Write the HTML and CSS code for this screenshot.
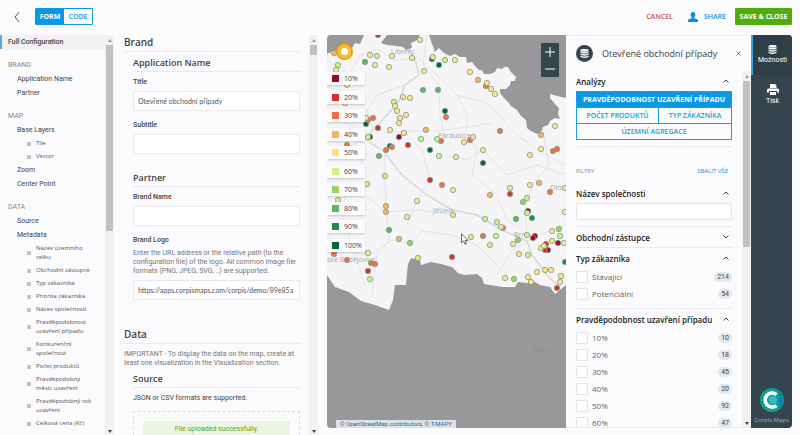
FILE: index.html
```html
<!DOCTYPE html>
<html lang="en">
<head>
    <meta charset="UTF-8">
    <meta name="viewport" content="width=device-width, initial-scale=1.0">
    <title>Corpis Maps - Configuration</title>
    <link rel="stylesheet" href="styles.css">
</head>
<body>

<header class="topbar">
    <button class="back" aria-label="Back">
        <svg width="6" height="12" viewBox="0 0 6 12"><path d="M5 1L1 6l4 5" /></svg>
    </button>
    <div class="mode">
        <button class="mode-btn active">FORM</button>
        <button class="mode-btn">CODE</button>
    </div>
    <div class="actions">
        <button class="cancel">CANCEL</button>
        <button class="share">
            <svg width="10" height="10" viewBox="0 0 10 10"><ellipse cx="5" cy="2.8" rx="2.3" ry="2.8" /><path d="M0 10V8.5Q0 7.400 1.500 7L3.700 6.200V5h2.600v1.200L8.500 7Q10 7.400 10 8.500V10z" /></svg>
            SHARE
        </button>
        <button class="save">SAVE &amp; CLOSE</button>
    </div>
</header>

<main class="workspace">
    <div class="nav-pane">
        <nav class="nav">
            <a href="#full" class="nav-full">Full Configuration</a>
            <h6>BRAND</h6>
            <a href="#app">Application Name</a>
            <a href="#partner">Partner</a>
            <h6>MAP</h6>
            <a href="#layers">Base Layers</a>
            <a href="#tile" class="sub">Tile</a>
            <a href="#vector" class="sub">Vector</a>
            <a href="#zoom">Zoom</a>
            <a href="#center">Center Point</a>
            <h6>DATA</h6>
            <a href="#source">Source</a>
            <a href="#metadata">Metadata</a>
            <a href="#m1" class="sub">Název územního celku</a>
            <a href="#m2" class="sub">Obchodní zástupce</a>
            <a href="#m3" class="sub">Typ zákazníka</a>
            <a href="#m4" class="sub">Priorita zákazníka</a>
            <a href="#m5" class="sub">Název společnosti</a>
            <a href="#m6" class="sub">Pravděpodobnost uzavření případu</a>
            <a href="#m7" class="sub">Konkurenční společnost</a>
            <a href="#m8" class="sub">Počet produktů</a>
            <a href="#m9" class="sub">Pravděpodobný měsíc uzavření</a>
            <a href="#m10" class="sub">Pravděpodobný rok uzavření</a>
            <a href="#m11" class="sub">Celková cena (Kč)</a>
        </nav>
        <div class="scrollbar"><i class="up"></i><i class="thumb thumb-nav"></i><i class="down"></i></div>
    </div>

    <div class="form-pane">
        <form class="form">
            <h2 id="full">Brand</h2>
            <section id="app">
                <h3>Application Name</h3>
                <label for="title">Title</label>
                <input type="text" id="title" value="Otevřené obchodní případy">
                <label for="subtitle">Subtitle</label>
                <input type="text" id="subtitle">
            </section>
            <section id="partner">
                <h3>Partner</h3>
                <label for="brandName">Brand Name</label>
                <input type="text" id="brandName">
                <label for="brandLogo">Brand Logo</label>
                <p class="hint">Enter the URL address or the relative path (to the configuration file) of the logo. All common image file formats (PNG, JPEG, SVG, ..) are supported.</p>
                <input type="text" id="brandLogo" value="https://apps.corpismaps.com/corpis/demo/89e85a">
            </section>
            <h2 class="data-title">Data</h2>
            <p class="intro">IMPORTANT - To display the data on the map, create at least one visualization in the Visualization section.</p>
            <section id="source">
                <h3>Source</h3>
                <p class="formats">JSON or CSV formats are supported.</p>
                <div class="upload">
                    <div class="upload-ok">File uploaded successfully.</div>
                </div>
            </section>
        </form>
        <div class="scrollbar"><i class="up"></i><i class="thumb thumb-form"></i><i class="down"></i></div>
    </div>

    <div class="preview">
        <div class="map">
            <svg class="map-canvas" viewBox="0 0 239 393" preserveAspectRatio="xMinYMin slice">
                <g class="roads">
                    <path d="M0 52L24 58 40 76 45 92 60 98 80 96 110 96 140 92 165 88" />
                    <path d="M38 104L56 116 75 140 100 160 125 175 150 180 175 195 200 206 205 220 222 242 232 252" class="main" />
                    <path d="M42 99L60 80 72 66 78 50 92 40 88 24 72 0" class="main" />
                    <path d="M0 25L22 40 33 20 50 14 70 26 90 22 110 40 130 60 160 68 190 100 215 118 239 130" />
                    <path d="M58 118V150L60 180 62 205 50 220 45 260" />
                    <path d="M0 150L30 155 60 177 90 175 125 180" />
                    <path d="M0 200L10 210 40 222 64 205 85 208 95 196 125 200 150 210 180 240" />
                    <path d="M118 120L140 125 156 115 180 140 210 130 239 140" />
                    <path d="M130 60L140 80 139 98 150 115 145 140 170 160 180 185 195 195" />
                    <path d="M200 200L198 175 205 150 222 130 215 90" />
                    <path d="M205 202L225 195 239 190M203 205L185 215 170 240M100 0L96 30 112 50 113 80 118 104" />
                    <path d="M0 120L20 112 35 106M0 85L20 88 40 98M40 118L20 150 15 180 28 220 38 250" />
                    <path d="M78 50L50 60 40 76M78 98L95 115 103 145 90 165 80 190" />
                </g>
                <g class="abroad">
                    <path d="M0 0H37L33 9 28 8 25 13 18 14 13 17 7 16 0 19z" />
                    <path d="M60 0L54 8 60 10 70 11 76 12 79 15 85 13 84 8 90 5 93 0z" />
                    <path d="M102 0L105 9 108 17 112 13 117 18 123 21 128 19 133 22 139 22 140 28 145 27 148 31 152 35 155 35 157 39 163 39 168 37 170 33 175 34 177 32 181 32 184 37 189 42 188 46 184 46 183 50 179 54 173 54 173 58 177 63 181 67 184 71 190 75 194 81 199 85 200 93 204 96 210 99 214 97 216 92 221 90 223 86 228 83 233 84 231 79 232 73 228 69 223 63 223 59 230 61 239 63V0z" />
                    <path d="M0 240L8 252 22 257 34 266 48 270 62 275 66 265 68 250 79 250 80 238 81 229 84 223 93 225 94 230 104 227 114 229 125 232 131 238 137 240 150 239 155 243 157 249 163 250 176 252 188 252 191 247 200 248 208 247 213 250 223 252 228 259 239 250V393H0z" />
                </g>
                <g class="places">
                    <text x="64" y="19">Liberec</text>
                    <text x="111" y="103">Pardubice</text>
                    <text x="106" y="178">Jihlava</text>
                    <text x="223" y="155">Olomouc</text>
                    <text x="187" y="202">Brno</text>
                    <text x="0" y="227">ské Budějovice</text>
                    <text x="205" y="318" class="faint">WIEN</text>
                </g>
                <g id="points"></g>
            </svg>

            <svg class="sun" width="17" height="17" viewBox="0 0 17 17"><circle cx="8.5" cy="8.5" r="7.5" class="rays" /><circle cx="8.5" cy="8.5" r="5" class="ring" /></svg>

            <ul class="legend">
                <li><i class="p10"></i>10%</li>
                <li><i class="p20"></i>20%</li>
                <li><i class="p30"></i>30%</li>
                <li><i class="p40"></i>40%</li>
                <li><i class="p50"></i>50%</li>
                <li><i class="p60"></i>60%</li>
                <li><i class="p70"></i>70%</li>
                <li><i class="p80"></i>80%</li>
                <li><i class="p90"></i>90%</li>
                <li><i class="p100"></i>100%</li>
            </ul>

            <div class="zoom">
                <button aria-label="Zoom in"><svg width="12" height="12" viewBox="0 0 12 12"><path d="M1 6h10M6 1v10" /></svg></button>
                <button aria-label="Zoom out"><svg width="12" height="12" viewBox="0 0 12 12"><path d="M1 6h10" /></svg></button>
            </div>

            <svg class="cursor" width="8" height="12" viewBox="0 0 8 12"><path d="M.5.8v9l2-1.900L4 11.300l1.400-.6L4 7.400h3z" /></svg>

            <div class="attribution">© <a href="#osm">OpenStreetMap contributors</a>, © <a href="#tmapy">T-MAPY</a></div>
        </div>

        <aside class="panel">
            <div class="panel-head">
                <span class="round-icon">
                    <svg width="9" height="9" viewBox="0 0 10 10"><ellipse cx="5" cy="1.500" rx="4.500" ry="1.500" /><path d="M.5 2.300v1.500c1 1.600 8 1.600 9 0V2.300c-1.500 1.500-7.500 1.500-9 0zM.5 4.700v1.500c1 1.600 8 1.600 9 0V4.700c-1.500 1.500-7.500 1.500-9 0zM.5 7.100v1.500c1 1.700 8 1.700 9 0V7.100c-1.500 1.500-7.500 1.500-9 0z" /></svg>
                </span>
                <h1>Otevřené obchodní případy</h1>
                <button class="close" aria-label="Close"><svg width="5" height="5" viewBox="0 0 5 5"><path d="M.5.5l4 4M4.500.5l-4 4" /></svg></button>
            </div>
            <div class="panel-body">
                <div class="panel-content">
                    <section class="group">
                        <button class="group-title">Analýzy<svg width="6" height="4" viewBox="0 0 6 4"><path d="M.5 3.500L3 1l2.500 2.500" /></svg></button>
                        <div class="analyses">
                            <button class="wide active">PRAVDĚPODOBNOST UZAVŘENÍ PŘÍPADU</button>
                            <button>POČET PRODUKTŮ</button>
                            <button>TYP ZÁKAZNÍKA</button>
                            <button class="wide">ÚZEMNÍ AGREGACE</button>
                        </div>
                    </section>
                    <div class="filters-head">
                        <span>FILTRY</span>
                        <button>SBALIT VŠE</button>
                    </div>
                    <section class="group">
                        <button class="group-title">Název společnosti<svg width="6" height="4" viewBox="0 0 6 4"><path d="M.5 3.500L3 1l2.500 2.500" /></svg></button>
                        <input type="text" class="search" aria-label="Název společnosti">
                    </section>
                    <section class="group collapsed">
                        <button class="group-title">Obchodní zástupce<svg width="6" height="4" viewBox="0 0 6 4"><path d="M.5.5L3 3 5.500.5" /></svg></button>
                    </section>
                    <section class="group">
                        <button class="group-title">Typ zákazníka<svg width="6" height="4" viewBox="0 0 6 4"><path d="M.5 3.500L3 1l2.500 2.500" /></svg></button>
                        <label class="option"><input type="checkbox">Stávající<b>214</b></label>
                        <label class="option"><input type="checkbox">Potenciální<b>54</b></label>
                    </section>
                    <section class="group">
                        <button class="group-title">Pravděpodobnost uzavření případu<svg width="6" height="4" viewBox="0 0 6 4"><path d="M.5 3.500L3 1l2.500 2.500" /></svg></button>
                        <label class="option"><input type="checkbox">10%<b>10</b></label>
                        <label class="option"><input type="checkbox">20%<b>18</b></label>
                        <label class="option"><input type="checkbox">30%<b>45</b></label>
                        <label class="option"><input type="checkbox">40%<b>20</b></label>
                        <label class="option"><input type="checkbox">50%<b>92</b></label>
                        <label class="option"><input type="checkbox">60%<b>47</b></label>
                    </section>
                </div>
                <div class="scrollbar"><i class="up"></i><i class="thumb thumb-panel"></i><i class="down"></i></div>
            </div>
        </aside>

        <div class="rail">
            <button class="rail-btn active">
                <svg width="9" height="9" viewBox="0 0 10 10"><ellipse cx="5" cy="1.500" rx="4.500" ry="1.500" /><path d="M.5 2.300v1.500c1 1.600 8 1.600 9 0V2.300c-1.500 1.500-7.500 1.500-9 0zM.5 4.700v1.500c1 1.600 8 1.600 9 0V4.700c-1.500 1.500-7.500 1.500-9 0zM.5 7.100v1.500c1 1.700 8 1.700 9 0V7.100c-1.500 1.500-7.500 1.500-9 0z" /></svg>
                Možnosti
            </button>
            <button class="rail-btn">
                <svg width="12" height="11" viewBox="0 0 12 11"><path d="M3 0h5l1.500 1.500V4H3zM1.500 4.500h9A1.500 1.500 0 0 1 12 6v2.500h-2V7H2v1.500H0V6a1.500 1.500 0 0 1 1.500-1.500zM3 8h6v3H3z" /></svg>
                Tisk
            </button>
            <a href="#corpis" class="brand">
                <svg width="24" height="24" viewBox="0 0 24 24">
                    <circle cx="12" cy="12" r="12" class="logo-bg" />
                    <path d="M12 0a12 12 0 0 1 12 12c0 4-3 6-5 8V4z" class="logo-side" />
                    <circle cx="13" cy="12" r="4" class="logo-dot" />
                    <path d="M16.500 6.500A7 7 0 1 0 16.500 17.500" class="logo-c" />
                </svg>
                Corpis Maps
            </a>
        </div>
    </div>
</main>

<script>
    // business cases by probability: [x, y, x, y, ...]
    const cases = {
        p90: [205,183, 238,227],
        p80: [38,27, 96,55, 111,55, 52,121, 62,195, 189,184],
        p100: [105,24, 112,30, 118,76, 39,89, 63,111, 103,115, 156,128],
        p10: [43,102, 72,102, 201,176, 208,201, 206,203, 231,208, 221,215],
        p20: [51,0, 51,93, 81,110, 103,145, 41,236, 183,159, 219,209, 218,215, 125,222, 230,253],
        p30: [119,82, 41,85, 46,83, 114,106, 20,110, 59,115, 65,112, 115,150, 7,219, 20,225, 44,228, 48,229,
            159,51, 173,96, 143,105, 226,116, 230,114, 223,157, 176,193, 156,201],
        p40: [7,18, 99,95, 59,171, 59,177, 72,204, 151,45, 214,100, 163,160, 212,148],
        p70: [83,208, 196,167, 191,205, 232,194, 187,244],
        p60: [11,30, 50,21, 118,25, 67,67, 41,102, 94,104, 110,104, 112,121, 58,141, 40,149, 11,165, 91,223,
            43,244, 200,163, 200,178, 158,184, 170,187, 144,202, 169,201, 163,210, 200,200, 233,201, 201,220],
        p50: [9,35, 43,20, 48,30, 65,21, 62,32, 93,5, 85,23, 106,22, 97,36, 20,50, 18,68, 76,62, 83,63, 68,71,
            70,76, 79,80, 73,83, 72,88, 39,83, 63,95, 77,98, 90,166, 80,182, 41,218, 128,25, 143,37, 160,48,
            164,54, 168,59, 137,107, 146,102, 156,115, 129,122, 228,91, 214,114, 203,120, 126,155, 183,153,
            203,150, 238,153, 126,180, 238,177, 174,192, 186,209, 225,196, 225,206, 237,208, 214,213, 217,211,
            192,219, 178,243, 201,242, 204,247, 210,237, 218,235, 224,235, 234,241, 233,247]
    };
    const points = document.getElementById('points');

    Object.keys(cases).forEach(key => {
        for (let i = 0; i < cases[key].length; i += 2) {
            const dot = document.createElementNS('http://www.w3.org/2000/svg', 'circle');
            dot.setAttribute('class', key);
            dot.setAttribute('cx', cases[key][i]);
            dot.setAttribute('cy', cases[key][i + 1]);
            dot.setAttribute('r', 2.7);
            points.appendChild(dot);
        }
    });
</script>

</body>
</html>
```
FILE: styles.css
```css
* {
    box-sizing: border-box;
}
body {
    margin: 0;
    height: 100vh;
    display: flex;
    flex-direction: column;
    overflow: hidden;
    background: #fbfafc;
    color: #444;
    font-family: 'Open Sans', 'Noto Sans', sans-serif;
    font-size: 7px;
    line-height: 9px;
}
h1, h2, h3, h6, p, ul {
    margin: 0;
    padding: 0;
}
button, input {
    font: inherit;
    color: inherit;
    margin: 0;
    padding: 0;
    border: 0;
    background: none;
}
a {
    color: inherit;
    text-decoration: none;
}

/* top bar */
.topbar {
    flex: none;
    height: 35px;
    padding: 8px 8px 0 14px;
    display: flex;
    align-items: flex-start;
    font-weight: 600;
}
.topbar button {
    height: 17px;
}
.back {
    width: 6px;
    margin-right: 15px;
}
.back svg {
    display: block;
    fill: none;
    stroke: #555;
}
.mode {
    display: flex;
    border: 1px solid #0a97e4;
    border-radius: 1px;
    height: 17px;
}
.topbar .mode-btn {
    width: 28px;
    height: 15px;
    color: #0a97e4;
}
.topbar .mode-btn.active {
    background: #0a97e4;
    color: #fff;
    font-weight: 700;
}
.actions {
    margin-left: auto;
    display: flex;
}
.cancel {
    color: #c4573f;
}
.share {
    display: flex;
    align-items: center;
    gap: 6px;
    margin: 0 9px 0 15px;
    color: #0a97e4;
}
.share svg {
    fill: #0a8fdc;
}
.save {
    width: 57px;
    background: #4fae0c;
    color: #fff;
    border-radius: 1px;
    font-weight: 700;
}

.workspace {
    flex: 1;
    min-height: 0;
    display: grid;
    grid-template-columns: 115px 203px 1fr;
}

/* scrollbars */
.scrollbar {
    flex: none;
    width: 9px;
    display: flex;
    flex-direction: column;
    align-items: center;
    background: #f1f0f2;
}
.up, .down {
    margin: 4px 0 3px;
    border: 2px solid transparent;
    border-top: 0;
    border-bottom: 3px solid #999;
}
.down {
    margin: auto 0 2px;
    border-top: 3px solid #444;
    border-bottom: 0;
}
.thumb {
    width: 7px;
    background: #c1c0c2;
}
.thumb-nav {
    height: 186px;
}
.thumb-form {
    height: 10px;
}
.thumb-panel {
    height: 166px;
}

/* navigation */
.nav-pane, .form-pane {
    display: flex;
    min-height: 0;
    overflow: hidden;
}
.nav-pane {
    padding-right: 1px;
}
.nav {
    flex: 1;
    min-width: 0;
}
.nav a {
    display: block;
    padding-left: 17px;
    font-family: Roboto, sans-serif;
    line-height: 14px;
    white-space: nowrap;
}
.nav h6 {
    margin-top: 9px;
    padding-left: 8px;
    font-family: Roboto, sans-serif;
    font-size: 7px;
    font-weight: 400;
    line-height: 14px;
    color: #888;
}
.nav .nav-full {
    padding-left: 6px;
    border-left: 2px solid #5aa9d6;
    background: #f1f0f2;
    font-weight: 500;
}
.nav .sub {
    display: flex;
    align-items: center;
    gap: 5px;
    padding: 2px 8px 2px 27px;
    font-family: 'Open Sans', sans-serif;
    line-height: 9px;
    font-size: 6px;
    white-space: normal;
    color: #555;
}
.nav .sub::before {
    content: "";
    flex: none;
    width: 4px;
    height: 4px;
    background: #c4c4c4;
}

/* form */
.form {
    flex: 1;
    min-width: 0;
    padding: 0 9px;
    font-family: Roboto, sans-serif;
}
.form h2, .form h3 {
    font-family: 'Open Sans', sans-serif;
    font-weight: 600;
    border-bottom: 1px solid #e9e8ec;
}
.form h2 {
    height: 17px;
    font-size: 10px;
    line-height: 14px;
}
.form section {
    padding-left: 9px;
}
.form h3 {
    margin-bottom: 6px;
    height: 20px;
    padding-top: 5px;
    font-size: 9px;
    line-height: 12px;
}
.form label {
    display: block;
    margin-bottom: 4px;
    font-weight: 500;
}
.form input {
    display: block;
    width: 100%;
    height: 20px;
    margin-bottom: 10px;
    padding: 0 4px;
    border: 1px solid #e9e8ec;
    border-radius: 1px;
    background: #fff;
    font-family: Lato, sans-serif;
    color: #555;
}
.form section + section {
    margin-top: 13px;
}
.hint, .intro {
    margin: 4px 0;
    color: #777;
}
.intro {
    margin: 6px 0 0;
}
.form .data-title {
    margin-top: 27px;
}
.formats {
    margin-bottom: 8px;
}
.upload {
    height: 60px;
    padding: 9px;
    border: 1px dashed #dcdbe0;
}
.upload-ok {
    padding: 4px;
    background: #ecf4e3;
    color: #58a618;
    text-align: center;
}

/* preview */
.preview {
    display: flex;
    margin: 0 8px 7px 9px;
    min-height: 0;
    border-radius: 4px;
    overflow: hidden;
}
.map {
    flex: 1;
    min-width: 0;
    position: relative;
    background: #f5f4f6;
    overflow: hidden;
}
.map-canvas {
    display: block;
    width: 100%;
    height: 100%;
}
.roads {
    fill: none;
    stroke: #e3e3e5;
}
.roads .main {
    stroke: #d7d7da;
    stroke-width: 1.5;
}
.abroad {
    fill: #989799;
}
.places {
    font-size: 7px;
    fill: #aaa9ae;
}
.places .faint {
    fill: #919093;
}
#points {
    stroke: #7fa08c;
    stroke-width: .8;
}
.p10 { fill: #a50026; background: #a50026; }
.p20 { fill: #d73027; background: #d73027; }
.p30 { fill: #f46d43; background: #f46d43; }
.p40 { fill: #fdae61; background: #fdae61; }
.p50 { fill: #fee08b; background: #fee08b; }
.p60 { fill: #d0ee86; background: #d0ee86; }
.p70 { fill: #98d55c; background: #98d55c; }
.p80 { fill: #5bb862; background: #5bb862; }
.p90 { fill: #1a8f4d; background: #1a8f4d; }
.p100 { fill: #006837; background: #006837; }

.sun {
    position: absolute;
    left: 9px;
    top: 8px;
    fill: #fff;
}
.sun .rays {
    stroke: #e8a000;
    stroke-width: 2;
}
.sun .ring {
    stroke: #f6bb2e;
    stroke-width: 3;
}
.legend {
    position: absolute;
    left: 0;
    top: 37px;
    height: 180px;
    display: flex;
    flex-direction: column;
    justify-content: space-between;
    list-style: none;
}
.legend li {
    display: flex;
    align-items: center;
    gap: 5px;
    width: 38px;
    height: 13px;
    padding-left: 5px;
    background: #fbfafc;
    box-shadow: 0 1px 2px rgba(0, 0, 0, 0.2);
}
.legend i {
    width: 7px;
    height: 7px;
}
.zoom {
    position: absolute;
    right: 7px;
    top: 8px;
    width: 18px;
    background: #35454e;
}
.zoom button {
    display: flex;
    width: 18px;
    height: 17px;
    align-items: center;
    justify-content: center;
}
.zoom svg {
    stroke: #fff;
}
.cursor {
    position: absolute;
    left: 134px;
    top: 198px;
    fill: #fff;
    stroke: #444;
    stroke-width: .8;
}
.attribution {
    position: absolute;
    left: 9px;
    bottom: 0;
    padding: 0 4px;
    line-height: 8px;
    font-family: Roboto, sans-serif;
    font-size: 6px;
    background: rgba(255, 255, 255, 0.7);
    color: #4d6f8c;
    white-space: nowrap;
}
.attribution a {
    color: #0078a8;
}

/* options panel */
.panel {
    width: 185px;
    display: flex;
    flex-direction: column;
    border-top: 1px solid #e9e8ec;
    border-bottom: 1px solid #e9e8ec;
}
.panel-head {
    flex: none;
    height: 35px;
    padding: 0 10px;
    display: flex;
    align-items: center;
}
.round-icon {
    width: 17px;
    height: 17px;
    border-radius: 50%;
    background: #35454e;
    display: flex;
    align-items: center;
    justify-content: center;
}
.round-icon svg, .rail-btn svg {
    fill: #fff;
}
.panel-head h1 {
    margin-left: 9px;
    font-size: 9px;
    font-weight: 400;
    line-height: 12px;
    white-space: nowrap;
}
.close {
    display: flex;
    margin-left: auto;
    stroke: #555;
    stroke-width: .8;
}
.panel-body {
    flex: 1;
    min-height: 0;
    display: flex;
}
.panel-content {
    flex: 1;
    min-width: 0;
    padding: 0 10px;
    overflow: hidden;
}
.group {
    padding-bottom: 6px;
    border-bottom: 1px solid #e9e8ec;
}
.group.collapsed {
    padding-bottom: 0;
}
.group:last-child {
    border: 0;
}
.group-title {
    display: flex;
    align-items: center;
    justify-content: space-between;
    width: 100%;
    height: 20px;
    padding-right: 3px;
    font-weight: 600;
    font-size: 8px;
    color: #222;
}
.group-title svg {
    fill: none;
    stroke: #444;
}
.analyses {
    display: grid;
    grid-template-columns: 81px 1fr;
    gap: 1px;
    border: 1px solid #1b9ce4;
    background: #1b9ce4;
}
.analyses button {
    height: 15px;
    background: #fbfafc;
    color: #1b9ce4;
    font-weight: 600;
    white-space: nowrap;
}
.analyses .wide {
    grid-column: 1 / 3;
}
.analyses .active {
    background: #0a97e4;
    color: #fff;
    font-weight: 700;
}
.filters-head {
    display: flex;
    justify-content: space-between;
    padding: 20px 4px 7px 0;
    font-size: 6px;
    color: #888;
}
.filters-head button {
    color: #0a97e4;
}
.search {
    display: block;
    width: 100%;
    height: 17px;
    border: 1px solid #e3e2e6;
    border-radius: 1px;
    background: #fff;
}
.option {
    display: flex;
    align-items: center;
    gap: 4px;
    height: 17px;
    font-size: 8px;
    color: #666;
}
.option input {
    appearance: none;
    width: 12px;
    height: 12px;
    border: 1px solid #e3e2e6;
    border-radius: 1px;
    background: #fff;
}
.option b {
    margin-left: auto;
    padding: 0 3px;
    border-radius: 5px;
    background: #e4e8ea;
    font-family: Roboto, sans-serif;
    font-size: 7px;
    line-height: 10px;
    font-weight: 400;
    color: #444;
}

/* right rail */
.rail {
    width: 41px;
    display: flex;
    flex-direction: column;
    background: #35454e;
    color: #fff;
}
.rail-btn {
    height: 40px;
    display: flex;
    flex-direction: column;
    align-items: center;
    justify-content: center;
    gap: 2px;
    border-left: 2px solid transparent;
    font-family: Roboto, sans-serif;
}
.rail-btn.active {
    background: #2f3f48;
    border-color: #3aa9e6;
}
.brand {
    margin-top: auto;
    padding-bottom: 3px;
    display: flex;
    flex-direction: column;
    align-items: center;
    gap: 4px;
    font-size: 6px;
    color: #aab4b9;
}
.logo-bg {
    fill: #11a08f;
}
.logo-side {
    fill: #0d83ad;
}
.logo-dot {
    fill: #3bb8cf;
}
.logo-c {
    fill: none;
    stroke: #fff;
    stroke-width: 3.500;
}
```
